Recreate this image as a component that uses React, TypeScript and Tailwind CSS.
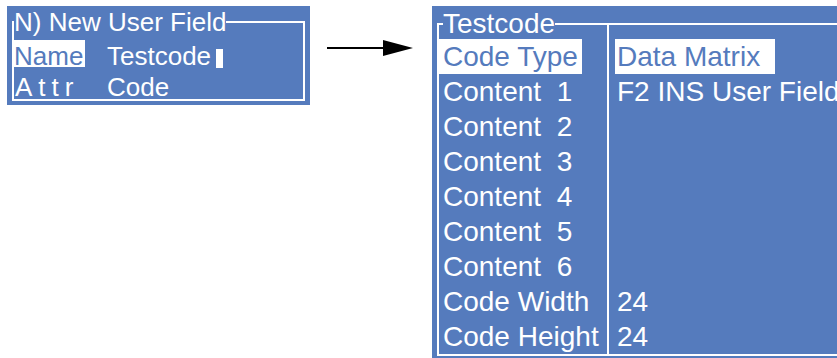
import React from 'react';

// panel rows for the code settings screen
const codeRows: { label: string; value: string; selected?: boolean }[] = [
  { label: 'Code Type', value: 'Data Matrix', selected: true },
  { label: 'Content  1', value: 'F2 INS User Field' },
  { label: 'Content  2', value: '' },
  { label: 'Content  3', value: '' },
  { label: 'Content  4', value: '' },
  { label: 'Content  5', value: '' },
  { label: 'Content  6', value: '' },
  { label: 'Code Width', value: '24' },
  { label: 'Code Height', value: '24' },
];

const NewFieldPanel: React.FC = () => (
  <div className="bg-[#557bbd] text-white w-[303px] shrink-0 pt-[3px] pb-[4px] px-[5px]">
    <fieldset className="border-2 border-white">
      <legend className="text-[26px] leading-[26px]">N) New User Field</legend>
      <div className="text-[26px]">
        <div className="flex items-start mt-[5px] h-[30px]">
          <div className="w-[93px] leading-[32px]">
            <span className="inline-block h-[27px] leading-[27px] pt-[3px] bg-white text-[#557bbd] pr-[2px]">Name</span>
          </div>
          <div className="leading-[32px]">
            Testcode
            <span className="inline-block w-[7px] h-[19px] bg-white ml-[5px] align-[-3px]"></span>
          </div>
        </div>
        <div className="flex h-[29px] leading-[34px]">
          <div className="w-[93px] pl-px tracking-[6px]">Attr</div>
          <div>Code</div>
        </div>
      </div>
    </fieldset>
  </div>
);

const Arrow: React.FC = () => (
  <svg width="86" height="20" viewBox="0 0 86 20" className="mt-[32px] ml-[17px] shrink-0">
    <line x1="0" y1="10" x2="60" y2="10" stroke="black" strokeWidth="2" />
    <polygon points="56,2 86,10 56,18" fill="black" />
  </svg>
);

const CodePanel: React.FC = () => (
  <div className="bg-[#557bbd] text-white w-[430px] shrink-0 pt-[4px] pb-[8px] pl-[5px] ml-[19px]">
    <fieldset className="border-2 border-white">
      <legend className="text-[28px] leading-[28px] ml-[4px]">Testcode</legend>
      <div className="flex text-[28px] leading-[35px] pt-px">
        <div className="w-[168px]">
          {codeRows.map((row) => (
            <div key={row.label} className="h-[35px] whitespace-pre">
              <span className={row.selected ? 'inline-block h-[35px] px-1 bg-white text-[#557bbd]' : 'inline-block px-1'}>
                {row.label}
              </span>
            </div>
          ))}
        </div>
        <div className="border-l-2 border-white -mt-[15px] pt-[15px] pl-[6px] flex-1">
          {codeRows.map((row) => (
            <div key={row.label} className="h-[35px] whitespace-nowrap">
              {row.selected ? (
                <span className="inline-block h-[35px] w-[160px] pl-[2px] bg-white text-[#557bbd]">{row.value}</span>
              ) : (
                <span className="pl-[2px]">{row.value}</span>
              )}
            </div>
          ))}
        </div>
      </div>
    </fieldset>
  </div>
);

export default function App() {
  return (
    <div className="w-[837px] h-[358px] overflow-hidden bg-white font-['Liberation_Sans',Arial,sans-serif]">
      <div className="flex items-start pt-[6px] pl-[7px]">
        <NewFieldPanel />
        <Arrow />
        <CodePanel />
      </div>
    </div>
  );
}
